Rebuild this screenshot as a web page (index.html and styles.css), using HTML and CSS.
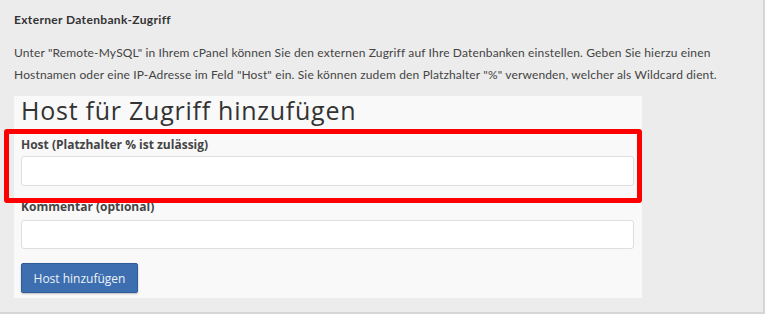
FILE: index.html
```html
<!DOCTYPE html>
<html>
<head>
    <meta name="viewport" content="width=device-width,initial-scale=1.0">
    <title>Externer Datenbank-Zugriff</title>
    <link rel="stylesheet" href="styles.css">
</head>
<body>
    <div class="page">
        <h3 class="section-title">Externer Datenbank-Zugriff</h3>
        <p class="intro">Unter "Remote-MySQL" in Ihrem cPanel können Sie den externen Zugriff auf Ihre Datenbanken einstellen. Geben Sie hierzu einen Hostnamen oder eine IP-Adresse im Feld "Host" ein. Sie können zudem den Platzhalter "%" verwenden, welcher als Wildcard dient.</p>

        <div class="panel">
            <h2 class="panel-title">Host für Zugriff hinzufügen</h2>
            <div class="field">
                <label for="host">Host (Platzhalter % ist zulässig)</label>
                <input type="text" id="host">
            </div>
            <div class="field field-comment">
                <label for="comment">Kommentar (optional)</label>
                <input type="text" id="comment">
            </div>
            <button class="btn-add">Host hinzufügen</button>
        </div>

        <div class="highlight"></div>
    </div>
</body>
</html>
```

FILE: styles.css
```css
* {
    margin: 0;
    padding: 0;
    box-sizing: border-box;
}

body {
    background: #fff;
    font-family: Lato, "Open Sans", sans-serif;
    color: #333;
}

.page {
    position: relative;
    width: 765px;
    height: 314px;
    background: #ececec;
    border-right: 2px solid #d6d6d6;
    border-bottom: 2px solid #d6d6d6;
    padding: 12px 0 0 14px;
}

.section-title {
    font-size: 12px;
    font-weight: 700;
    line-height: 15px;
    letter-spacing: 0.35px;
    color: #333;
}

.intro {
    margin-top: 15px;
    font-size: 12px;
    line-height: 22px;
    letter-spacing: 0.15px;
    color: #444;
    width: 742px;
}

.panel {
    margin-top: 10px;
    width: 628px;
    background: #f9f9f9;
    padding: 0 7px 5px 7px;
}

.panel-title {
    font-family: "Open Sans", sans-serif;
    font-size: 25px;
    font-weight: 400;
    line-height: 28px;
    letter-spacing: 0.75px;
    color: #333;
}

.field {
    margin-top: 14px;
}

.field-comment {
    margin-top: 14px;
}

.field label {
    display: block;
    font-family: "Open Sans", sans-serif;
    font-size: 12px;
    font-weight: 700;
    line-height: 14px;
    color: #444;
}

.field input {
    display: block;
    width: 613px;
    height: 30px;
    margin-top: 4px;
    background: #fff;
    border: 1px solid #dedede;
    border-radius: 3px;
}

.field-comment input {
    height: 29px;
    margin-top: 6px;
}

.btn-add {
    display: block;
    margin-top: 14px;
    width: 117px;
    height: 30px;
    background: #3c6eb0;
    color: #eef2f8;
    border: 1px solid #2f5c99;
    border-radius: 2px;
    font-family: "Open Sans", sans-serif;
    font-size: 12px;
    box-shadow: 0 1px 2px rgba(0, 0, 0, 0.25);
}

.highlight {
    position: absolute;
    left: 4px;
    top: 129px;
    width: 638px;
    height: 74px;
    border: 5px solid #ff0000;
    border-radius: 3px;
}
```
